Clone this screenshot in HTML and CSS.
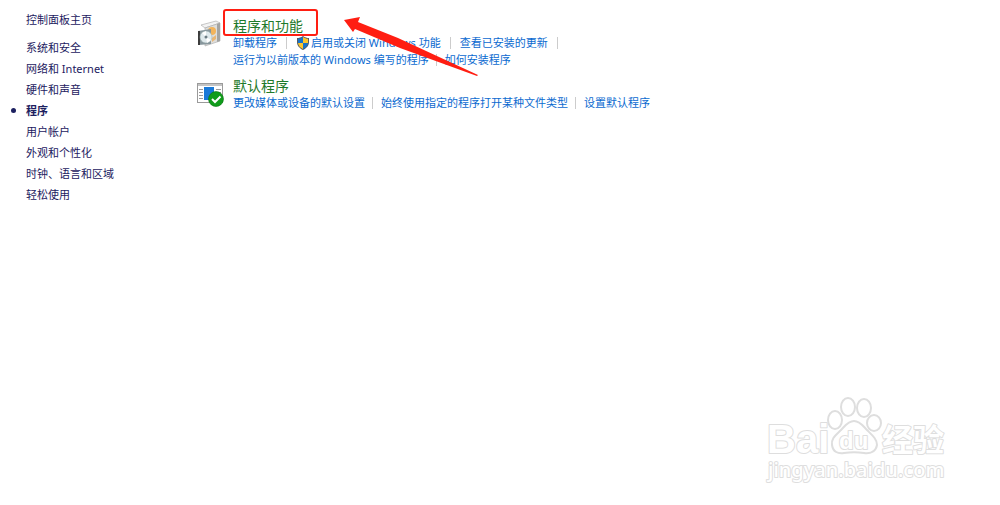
FILE: index.html
```html
<!DOCTYPE html>
<html lang="zh-CN">
<head>
  <meta charset="UTF-8">
  <meta name="viewport" content="width=device-width, initial-scale=1.0">
  <title>程序</title>
  <link rel="stylesheet" href="styles.css">
</head>
<body>
  <div class="layout">
    <nav class="sidebar">
      <a class="home" href="#">控制面板主页</a>
      <ul>
        <li><a href="#">系统和安全</a></li>
        <li><a href="#">网络和 Internet</a></li>
        <li><a href="#">硬件和声音</a></li>
        <li class="current"><a href="#" aria-current="page">程序</a></li>
        <li><a href="#">用户帐户</a></li>
        <li><a href="#">外观和个性化</a></li>
        <li><a href="#">时钟、语言和区域</a></li>
        <li><a href="#">轻松使用</a></li>
      </ul>
    </nav>

    <main class="content">
      <section class="category">
        <svg class="icon" viewBox="0 0 28 28" aria-hidden="true">
          <path d="M5 5 L20 1 L24 3 L9 8 Z" fill="#f3f3f3" stroke="#a5a5a5" stroke-width=".6"/>
          <path d="M9 8 L24 3 V21 L9 26 Z" fill="#dededc" stroke="#aaa" stroke-width=".6"/>
          <path d="M21 4 L24 3 V21 L21 22 Z" fill="#a4a4a2"/>
          <circle cx="16" cy="11" r="4" fill="#f3b45c"/>
          <path d="M16 18 l4 -3 v4 l-4 3 z" fill="#e9b777"/>
          <path d="M2 11 L15 9 V24 L2 25 Z" fill="#87969c"/>
          <path d="M2 11 L4 11 V25 L2 25 Z" fill="#3c3c3c"/>
          <ellipse cx="10" cy="17" rx="6" ry="6" fill="#dfe9ec" stroke="#9aa" stroke-width=".5"/>
          <path d="M10 17 L6 13 L10 11 Z M10 17 L15 20 L11 23 Z" fill="#fff"/>
          <circle cx="10" cy="17" r="1.500" fill="#6b7b82"/>
        </svg>
        <div>
          <h2><a class="marked" href="#">程序和功能</a></h2>
          <ul class="tasks">
            <li><a href="#">卸载程序</a></li>
            <li>
              <a href="#"><svg class="shield" viewBox="0 0 14 14" aria-hidden="true">
                <path d="M7 0 C5 1.500 3 2 1 2 V6 C1 10 4 12.500 7 14 C10 12.500 13 10 13 6 V2 C11 2 9 1.500 7 0 Z" fill="#555b62"/>
                <path d="M7 1 C5 2.300 4 2.700 2 2.800 V7 H7 Z M7 7 H12 C11.700 10 9.500 11.800 7 13 Z" fill="#1873c9"/>
                <path d="M7 1 C9 2.300 10 2.700 12 2.800 V7 H7 Z M7 7 H2 C2.300 10 4.500 11.800 7 13 Z" fill="#fcc62c"/>
              </svg>启用或关闭 Windows 功能</a>
            </li>
            <li><a href="#">查看已安装的更新</a></li>
          </ul>
          <ul class="tasks last">
            <li><a href="#">运行为以前版本的 Windows 编写的程序</a></li>
            <li><a href="#">如何安装程序</a></li>
          </ul>
        </div>
      </section>

      <section class="category">
        <svg class="icon" viewBox="0 0 28 28" aria-hidden="true">
          <rect x="1.500" y="3.500" width="25" height="19" fill="#fff" stroke="#9a9a9a"/>
          <path d="M2 5 H26" stroke="#c4c4c4" stroke-width="2"/>
          <path d="M3 9.500 H7 M3 12.500 H7 M3 15.500 H7 M3 18.500 H7 M20 9.500 H25 M20 12.500 H25" stroke="#9a9a9a"/>
          <rect x="8" y="7" width="10" height="13" fill="#1979d8"/>
          <circle cx="20" cy="19" r="7.500" fill="#109c1b" stroke="#087511" stroke-width=".6"/>
          <path d="M16 19 L19 22 L24.500 16.500" fill="none" stroke="#fff" stroke-width="2"/>
        </svg>
        <div>
          <h2><a href="#">默认程序</a></h2>
          <ul class="tasks last">
            <li><a href="#">更改媒体或设备的默认设置</a></li>
            <li><a href="#">始终使用指定的程序打开某种文件类型</a></li>
            <li><a href="#">设置默认程序</a></li>
          </ul>
        </div>
      </section>

      <svg class="arrow" viewBox="0 0 140 64" aria-hidden="true">
        <path d="M4 6 L20 3 L18 8 L58 24 L138 61 L137 62 L60 34 L15 15 L13 18 Z" fill="#ff1e12"/>
      </svg>
    </main>
  </div>

  <svg class="watermark" viewBox="0 0 210 100">
    <g class="paw">
      <ellipse cx="85" cy="30" rx="7" ry="9"/>
      <ellipse cx="98" cy="17" rx="7" ry="9"/>
      <ellipse cx="114" cy="18" rx="7" ry="9"/>
      <ellipse cx="124" cy="33" rx="7" ry="8"/>
      <path d="M104 31 C98 31 95 36 91 40 C86 45 81 48 82 55 C83 62 88 64 94 63 C101 62 107 62 114 63 C121 64 126 61 127 55 C127 49 122 45 117 40 C113 36 110 31 104 31 Z"/>
    </g>
    <text class="logo" x="17" y="63">Bai</text>
    <text class="du" x="89" y="59">du</text>
    <text class="logo-cn" x="132" y="61">经验</text>
    <text class="url" x="18" y="87">jingyan.baidu.com</text>
  </svg>
</body>
</html>
```

FILE: styles.css
```css
body {
  margin: 0;
  min-height: 100vh;
  position: relative;
  background: #fff;
  font-family: "Noto Sans", "Noto Sans CJK SC", sans-serif;
  font-size: 11px;
  line-height: 17px;
}

a {
  text-decoration: none;
}

a:hover {
  text-decoration: underline;
}

ul {
  list-style: none;
  margin: 0;
  padding: 0;
}

.layout {
  display: flex;
}

/* Left navigation */
.sidebar {
  width: 170px;
  flex-shrink: 0;
  padding: 11px 0 0 26px;
}

.sidebar a {
  color: #1c2060;
}

.sidebar ul {
  margin-top: 9px;
}

.sidebar li {
  line-height: 21px;
}

.current {
  position: relative;
  font-weight: bold;
}

.current::before {
  content: "";
  position: absolute;
  left: -15px;
  top: 8px;
  width: 5px;
  height: 5px;
  border-radius: 50%;
  background: #1c2060;
}

/* Categories */
.content {
  position: relative;
  flex: 1;
  padding-top: 17px;
}

.category {
  display: flex;
  gap: 9px;
  margin-bottom: 9px;
}

.icon {
  width: 28px;
  height: 28px;
  margin-top: 3px;
  flex-shrink: 0;
}

h2 {
  margin: 0;
  font-size: 14px;
  font-weight: normal;
  line-height: 17px;
}

h2 a {
  position: relative;
  color: #1f7a2a;
}

.marked::after {
  content: "";
  position: absolute;
  inset: -7px -15px -1px -10px;
  border: 2px solid #ff1e12;
  border-radius: 3px;
}

.tasks {
  display: flex;
  flex-wrap: wrap;
}

.tasks li {
  display: flex;
  align-items: center;
}

.tasks a {
  display: flex;
  align-items: center;
  color: #0b6ad0;
  white-space: pre;
}

.tasks li::after {
  content: "";
  width: 1px;
  height: 12px;
  margin: 0 9px;
  background: #ccc;
}

.tasks.last li::after {
  margin: 0 8px 0 7px;
}

.tasks.last li:last-child::after {
  display: none;
}

.shield {
  width: 14px;
  height: 14px;
  margin-right: 1px;
}

.arrow {
  position: absolute;
  left: 144px;
  top: 14px;
  width: 140px;
  height: 64px;
  pointer-events: none;
}

/* Watermark in the corner */
.watermark {
  position: absolute;
  right: 40px;
  bottom: 15px;
  width: 210px;
  height: 100px;
  fill: #fff;
  stroke: #dedede;
  stroke-width: 2px;
  stroke-linejoin: round;
}

.watermark text {
  paint-order: stroke;
}

.logo {
  font: bold 40px "Liberation Sans", sans-serif;
}

.du {
  font: bold 24px "Liberation Sans", sans-serif;
}

.logo-cn {
  font: bold 31px "Noto Sans CJK SC", sans-serif;
}

.url {
  font: 500 20px "Noto Sans", sans-serif;
}
```
